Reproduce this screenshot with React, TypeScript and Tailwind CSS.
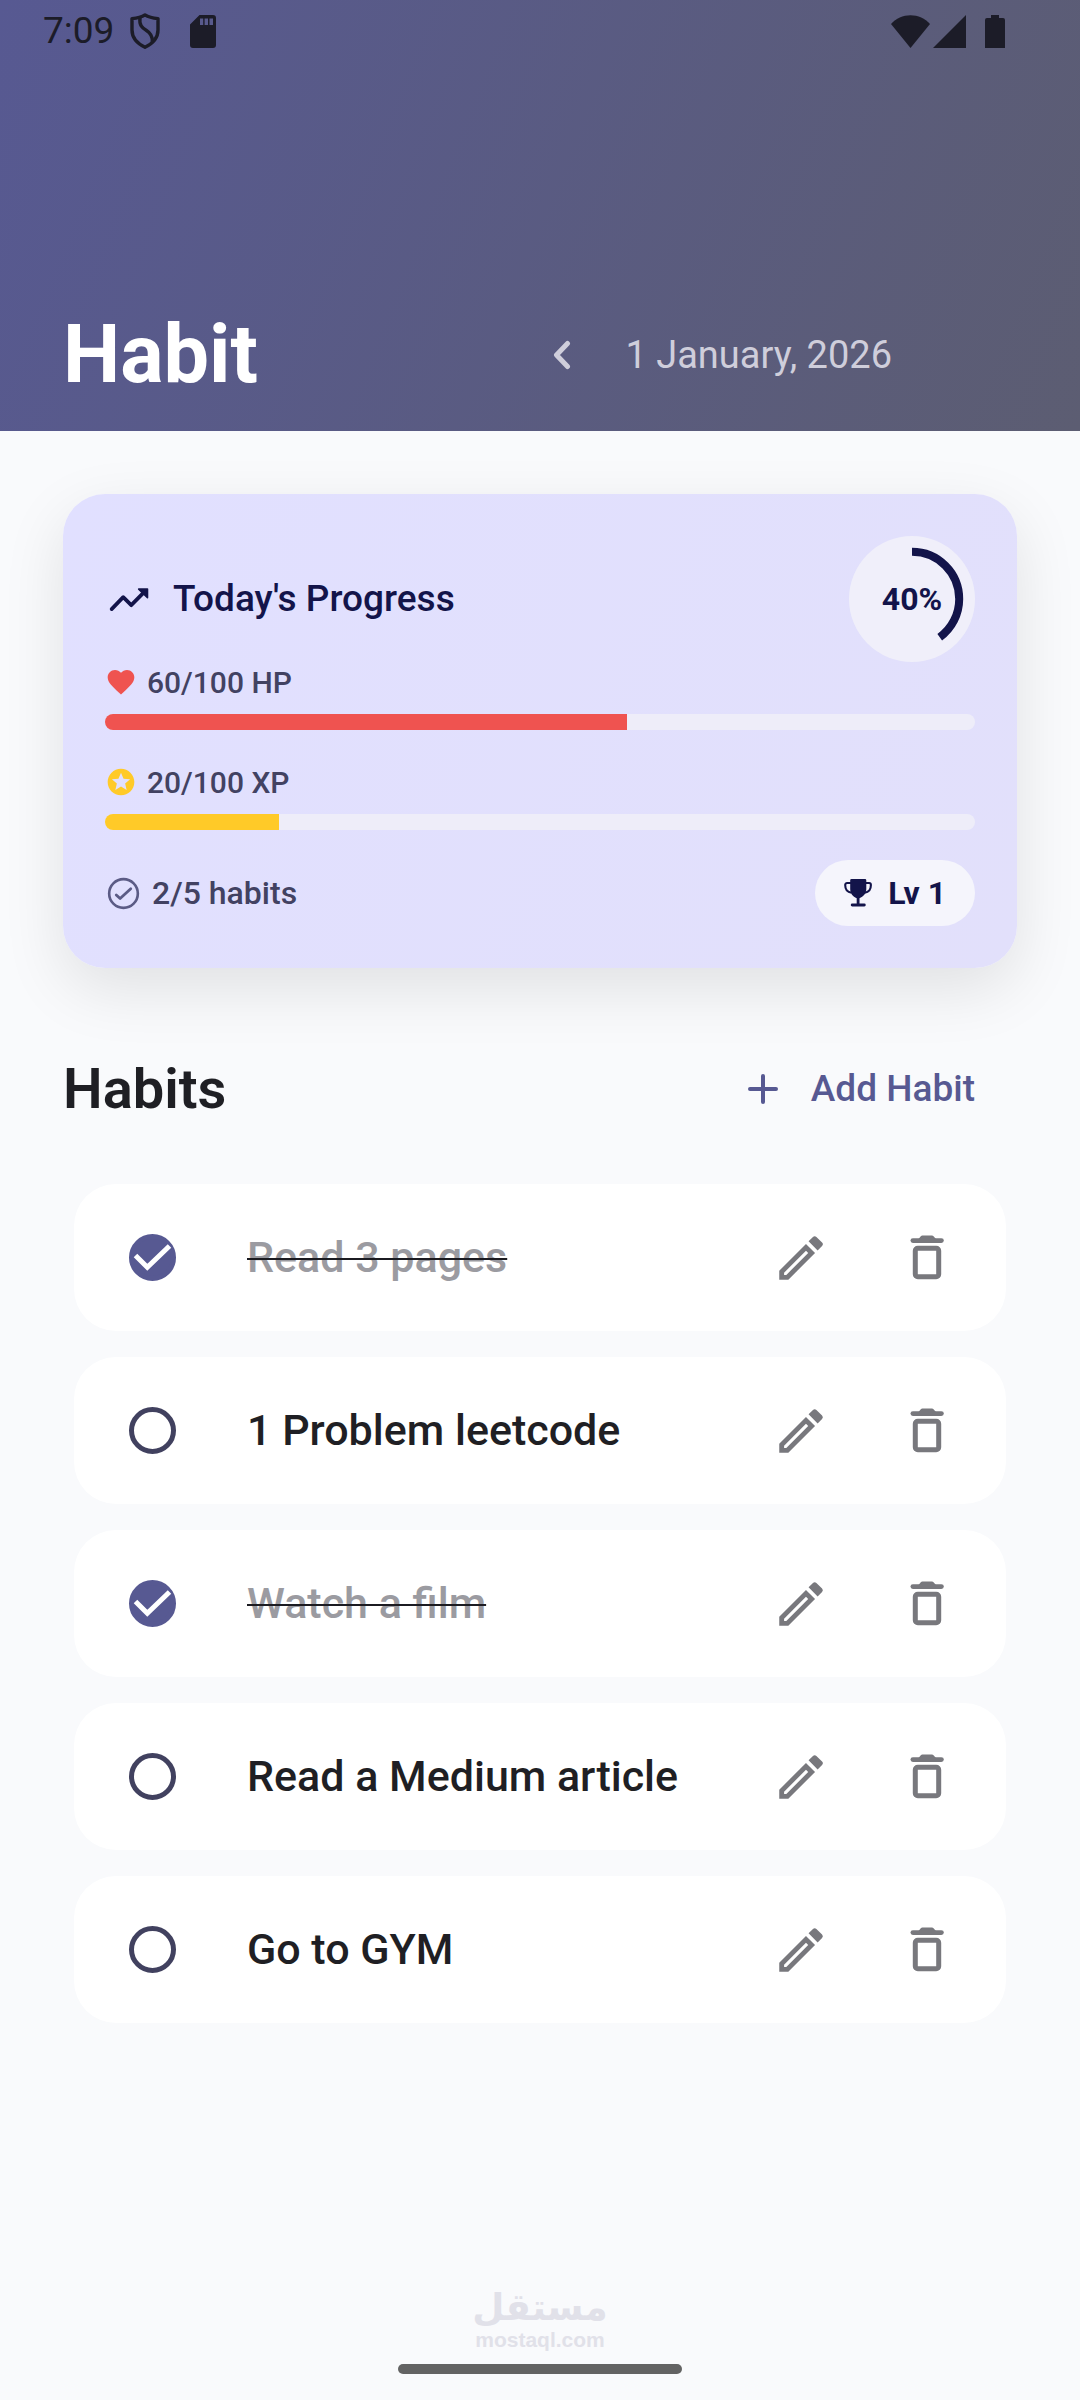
import React, { useState } from 'react';
import { MdFavorite, MdOutlineEdit, MdStars } from 'react-icons/md';

const initialHabits = [
  { id: 1, name: 'Read 3 pages', done: true },
  { id: 2, name: '1 Problem leetcode', done: false },
  { id: 3, name: 'Watch a film', done: true },
  { id: 4, name: 'Read a Medium article', done: false },
  { id: 5, name: 'Go to GYM', done: false },
];

const TrendingIcon = () => (
  <svg viewBox="0 0 24 24" className="size-[47px]" fill="none" stroke="currentColor" strokeLinecap="round" strokeLinejoin="round">
    <path d="M3.4 16.9 9.3 10.8 13.4 14.9 19.6 8.6" strokeWidth="1.9" />
    <path d="M17.2 6.7H21.7V11.1Z" fill="currentColor" strokeWidth="0.8" />
  </svg>
);

const CheckCircleIcon = () => (
  <svg viewBox="0 0 24 24" className="size-[37px] text-[#5b5b85]" fill="none" stroke="currentColor" strokeLinecap="round" strokeLinejoin="round">
    <circle cx="12" cy="12" r="9.3" strokeWidth="1.7" />
    <path d="M7.3 12.9 9.8 15.3 16.7 8.9" strokeWidth="1.8" />
  </svg>
);

const TrophyIcon = () => (
  <svg viewBox="0 0 28 28" className="size-7" fill="none">
    <path d="M7.5 0H21a1.3 1.3 0 0 1 1.3 1.3V10c0 4.5-3 7.5-6.8 9.3V24.5H20.3a1.4 1.4 0 0 1 0 2.9H8.2a1.4 1.4 0 0 1 0-2.9H12.7V19.3C8.9 17.5 6.2 14.5 6.2 10V1.3A1.3 1.3 0 0 1 7.5 0Z" fill="currentColor" />
    <path d="M7 4H3.2C1.8 4 1.2 4.9 1.2 6.1c0 4.2 2.3 7.2 6.3 7.7M21.5 4h3.6c1.3 0 1.8.9 1.8 2.1 0 4.2-2.2 7.2-6.2 7.7" stroke="currentColor" strokeWidth="2.1" />
  </svg>
);

const TrashIcon = () => (
  <svg viewBox="0 0 58 58" className="size-[58px]" fill="none">
    <rect x="17.3" y="19.3" width="23.4" height="28.4" rx="2.5" stroke="currentColor" strokeWidth="5" />
    <rect x="12.5" y="9.2" width="33.3" height="4.8" rx="2.4" fill="currentColor" />
    <path d="M20.5 10 22.8 7.3C23.2 6.8 23.7 6.5 24.4 6.5H34c.6 0 1.1.3 1.5.8L38 10Z" fill="currentColor" />
  </svg>
);

const StatusBar = () => (
  <div className="flex h-[62px] items-center justify-between pl-[43px] pr-[75px] text-[#1c1c28]">
    <div className="flex items-center">
      <span className="text-[37px] leading-[62px]">7:09</span>
      <svg viewBox="0 0 30 36" className="ml-4 h-9 w-[30px]" fill="none" stroke="currentColor" strokeWidth="3.4" strokeLinejoin="round">
        <path d="M15 1.9C11.5 4.2 6.8 5.2 2 5.6V17c0 7.6 5.2 13.5 13 17.2C22.8 30.5 28 24.6 28 17V5.6C23.2 5.2 18.5 4.2 15 1.9Z" />
        <path d="M10 4.8C9 12 12 14.8 16.5 17.5c4 2.5 6 5.5 5.8 11" />
      </svg>
      <svg viewBox="0 0 26 33" className="ml-[30px] h-[33px] w-[26px]">
        <path d="M9.5 0H23a3 3 0 0 1 3 3v27a3 3 0 0 1-3 3H3a3 3 0 0 1-3-3V9.5ZM10 3.5V10h3.2V3.5ZM14.6 3.5V10h3.4V3.5ZM19.5 3.5V10H23V3.5Z" fill="currentColor" fillRule="evenodd" />
      </svg>
    </div>
    <div className="flex items-center gap-[3px]">
      <svg viewBox="0 0 39 33" className="h-[33px] w-[39px]">
        <path d="M0 9C5 3.5 12 .3 19.5.3S34 3.5 39 9L19.5 33Z" fill="currentColor" />
      </svg>
      <svg viewBox="0 0 33 33" className="size-[33px]">
        <path d="M33 0V33H0Z" fill="currentColor" />
      </svg>
      <svg viewBox="0 0 20 33" className="ml-4 h-[33px] w-5">
        <path d="M6 0h8v3h4a2 2 0 0 1 2 2v28H0V5a2 2 0 0 1 2-2h4Z" fill="currentColor" />
      </svg>
    </div>
  </div>
);

const Header = () => (
  <header className="bg-[linear-gradient(112deg,#575992,#5c5d72)]">
    <StatusBar />
    <div className="flex h-[369px] items-end justify-between pb-[34px] pl-[63px] pr-[188px]">
      <h1 className="text-[81px] font-bold leading-[84px] text-white">Habit</h1>
      <div className="flex h-[84px] items-center gap-[54px] text-[#cfcedb]">
        <button type="button" aria-label="Previous day" className="flex size-10 items-center justify-end">
          <svg viewBox="0 0 18 30" className="h-[30px] w-[18px]" fill="none" stroke="currentColor" strokeWidth="5" strokeLinecap="round" strokeLinejoin="round">
            <path d="M14.5 3.5 3.5 15 14.5 26.5" />
          </svg>
        </button>
        <span className="whitespace-nowrap text-[38px]">1 January, 2026</span>
      </div>
    </div>
  </header>
);

type StatProps = {
  icon: React.ReactNode;
  label: string;
  value: number;
  barClass: string;
};

const Stat = ({ icon, label, value, barClass }: StatProps) => (
  <div>
    <div className="flex h-10 items-center gap-[10px] text-[30px] font-medium text-[#424262]">
      {icon}
      <span>{label}</span>
    </div>
    <div
      role="progressbar"
      aria-label={label}
      aria-valuenow={value}
      aria-valuemin={0}
      aria-valuemax={100}
      className="mt-3 h-4 overflow-hidden rounded-full bg-[#eeedf9]"
    >
      <div className={`h-full ${barClass}`} style={{ width: `${value}%` }} />
    </div>
  </div>
);

const ProgressRing = ({ percent }: { percent: number }) => (
  <div className="grid size-[126px] place-items-center rounded-full bg-[#f0effa]">
    <svg viewBox="0 0 126 126" className="col-start-1 row-start-1 size-[126px] -rotate-90" fill="none">
      <circle cx="63" cy="63" r="47.2" stroke="#13144a" strokeWidth="8" pathLength="100" strokeDasharray={`${percent} 100`} />
    </svg>
    <span className="col-start-1 row-start-1 text-[32px] font-bold">{percent}%</span>
  </div>
);

const ProgressCard = () => (
  <section className="rounded-[42px] bg-[linear-gradient(116deg,#e1e0ff,#e2e0fb)] p-[42px] text-[#13144a] shadow-[0_21px_63px_rgba(0,0,0,0.1)]">
    <div className="flex items-center justify-between">
      <h2 className="flex items-center gap-[21px] text-[37px] font-medium">
        <TrendingIcon />
        Today's Progress
      </h2>
      <ProgressRing percent={40} />
    </div>

    <div className="flex flex-col gap-8">
      <Stat icon={<MdFavorite className="size-8 text-[#ef5350]" />} label="60/100 HP" value={60} barClass="bg-[#ef5350]" />
      <Stat icon={<MdStars className="size-8 text-[#ffca28]" />} label="20/100 XP" value={20} barClass="bg-[#ffca28]" />
    </div>

    <div className="mt-[30px] flex items-center justify-between">
      <div className="flex items-center gap-[10px] text-[32px] font-medium text-[#424262]">
        <CheckCircleIcon />
        2/5 habits
      </div>
      <div className="flex h-[66px] items-center gap-4 rounded-full bg-[#f5f5fc] px-[29px] text-[32px] font-bold">
        <TrophyIcon />
        Lv 1
      </div>
    </div>
  </section>
);

type HabitRowProps = {
  name: string;
  done: boolean;
  onToggle: () => void;
};

const HabitRow = ({ name, done, onToggle }: HabitRowProps) => (
  <li className="flex h-[147px] items-center rounded-[42px] bg-white pl-[55px] pr-4">
    <label className="flex flex-1 items-center gap-[71px]">
      <span className="grid size-[47px] place-items-center">
        <input
          type="checkbox"
          checked={done}
          onChange={onToggle}
          className="col-start-1 row-start-1 size-[47px] appearance-none rounded-full border-[5px] border-[#41415f] checked:border-[#575992] checked:bg-[#575992]"
        />
        {done && (
          <svg viewBox="0 0 47 47" className="pointer-events-none col-start-1 row-start-1 size-[47px]" fill="none" stroke="#fff" strokeWidth="5">
            <path d="M6.5 21.5 18.3 33.3 40.5 12" />
          </svg>
        )}
      </span>
      <span className={done ? 'text-[43px] font-medium text-[#9b9ba1] line-through decoration-[#1b1b21] decoration-2' : 'text-[43px] font-medium text-[#1f1f24]'}>
        {name}
      </span>
    </label>
    <button type="button" aria-label={`Edit ${name}`} className="grid size-[126px] place-items-center text-[#78787d]">
      <MdOutlineEdit className="size-[58px]" />
    </button>
    <button type="button" aria-label={`Delete ${name}`} className="grid size-[126px] place-items-center text-[#78787d]">
      <TrashIcon />
    </button>
  </li>
);

const App = () => {
  const [habits, setHabits] = useState(initialHabits);

  const toggle = (id: number) =>
    setHabits((list) => list.map((h) => (h.id === id ? { ...h, done: !h.done } : h)));

  return (
    <div className="flex min-h-screen flex-col bg-[#f9fafc] font-['Roboto',sans-serif]">
      <Header />

      <main className="px-[63px] pt-[63px]">
        <ProgressCard />

        {/* Section Header */}
        <div className="mt-[58px] flex h-[126px] items-center justify-between">
          <h2 className="text-[56px] font-semibold text-[#1f1f24]">Habits</h2>
          <button type="button" className="flex h-full items-center gap-[22px] px-[42px] text-[37px] font-medium text-[#575992]">
            <svg viewBox="0 0 52 52" className="size-[52px]" fill="none" stroke="currentColor" strokeWidth="4" strokeLinecap="round">
              <path d="M13 26H39M26 13V39" />
            </svg>
            Add Habit
          </button>
        </div>

        {/* Habit List */}
        <ul className="mx-[11px] mt-8 flex flex-col gap-[26px]">
          {habits.map((habit) => (
            <HabitRow key={habit.id} name={habit.name} done={habit.done} onToggle={() => toggle(habit.id)} />
          ))}
        </ul>
      </main>

      <footer className="mt-auto flex flex-col items-center pb-[26px] font-bold text-[#e1e1e9]">
        <span lang="ar" className="font-['DejaVu_Sans'] text-[37px] leading-10">مستقل</span>
        <span className="font-['Liberation_Sans'] text-[21px] leading-6">mostaql.com</span>
        <div className="mt-3 h-[10px] w-[284px] rounded-full bg-[#636363]" />
      </footer>
    </div>
  );
};

export default App;
